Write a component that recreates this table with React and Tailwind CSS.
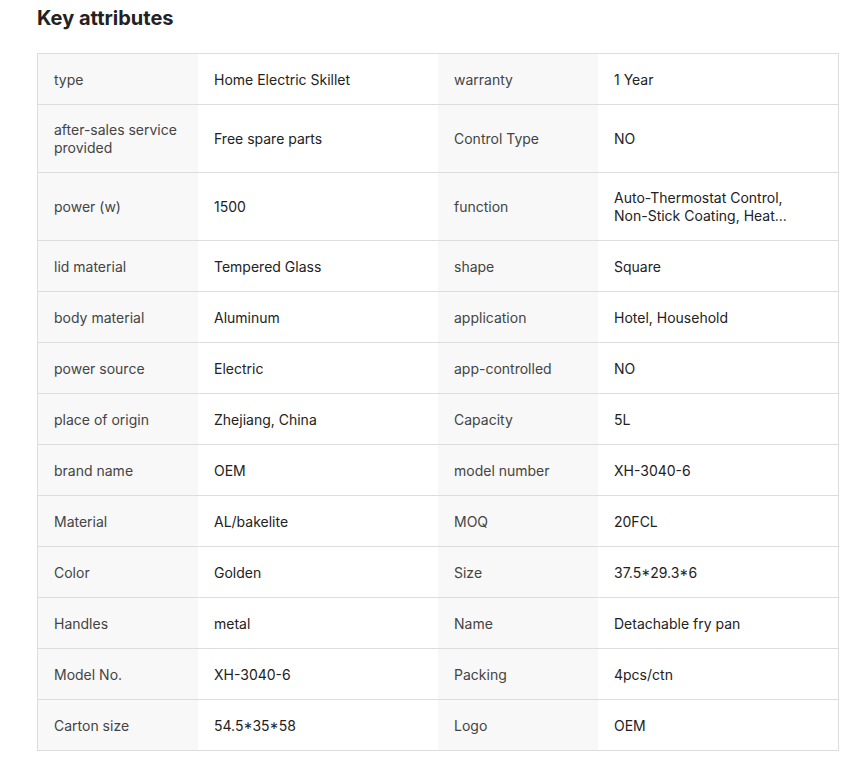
import React from "react";

const rows = [
  ["type", "Home Electric Skillet", "warranty", "1 Year"],
  ["after-sales service provided", "Free spare parts", "Control Type", "NO"],
  ["power (w)", "1500", "function", ["Auto-Thermostat Control,", "Non-Stick Coating, Heat..."]],
  ["lid material", "Tempered Glass", "shape", "Square"],
  ["body material", "Aluminum", "application", "Hotel, Household"],
  ["power source", "Electric", "app-controlled", "NO"],
  ["place of origin", "Zhejiang, China", "Capacity", "5L"],
  ["brand name", "OEM", "model number", "XH-3040-6"],
  ["Material", "AL/bakelite", "MOQ", "20FCL"],
  ["Color", "Golden", "Size", "37.5*29.3*6"],
  ["Handles", "metal", "Name", "Detachable fry pan"],
  ["Model No.", "XH-3040-6", "Packing", "4pcs/ctn"],
  ["Carton size", "54.5*35*58", "Logo", "OEM"],
];

function Text({ value }) {
  if (Array.isArray(value)) {
    return value.map((line, i) => <div key={i}>{line}</div>);
  }
  return value;
}

export default function App() {
  return (
    <div className="min-h-screen bg-white pl-[37px] pr-[21px] pt-[4px] font-['Inter',sans-serif]">
      <h2 className="text-[20px] font-bold leading-[28px] text-[#222]">Key attributes</h2>
      <div className="mt-[21px] w-[802px] border-x border-t border-[#dddddd] text-[14px] leading-[18px]">
        {rows.map((r, i) => {
          const tall = i === 1 || i === 2;
          return (
            <div
              key={i}
              className={`grid grid-cols-[160px_240px_160px_240px] border-b border-[#dddddd] ${tall ? "h-[68px]" : "h-[51px]"}`}
            >
              <div className="flex items-center bg-[#f8f8f8] px-4 pt-px text-[#444]">
                <div>{r[0]}</div>
              </div>
              <div className="flex items-center bg-white px-4 pt-px text-[#222]">
                <div>{r[1]}</div>
              </div>
              <div className="flex items-center bg-[#f8f8f8] px-4 pt-px text-[#444]">
                <div>{r[2]}</div>
              </div>
              <div className="flex items-center bg-white px-4 pt-px text-[#222]">
                <div>
                  <Text value={r[3]} />
                </div>
              </div>
            </div>
          );
        })}
      </div>
    </div>
  );
}
